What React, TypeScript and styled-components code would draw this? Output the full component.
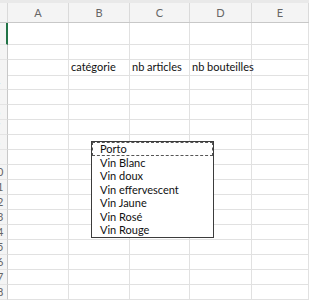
import React from 'react';
import styled, { createGlobalStyle } from 'styled-components';

const GlobalStyle = createGlobalStyle`
  html, body {
    margin: 0;
    padding: 0;
    background: #ffffff;
  }
  * {
    box-sizing: border-box;
  }
`;

const COLS = '8px 61px 61px 60px 62px 1fr';
const GRID = '#e1e1e1';

const Sheet = styled.div`
  position: relative;
  width: 309px;
  height: 300px;
  overflow: hidden;
  background: #ffffff;
  font-family: Lato, 'Liberation Sans', sans-serif;
  font-size: 11px;
  color: #111;
`;

const TopStrip = styled.div`
  height: 3px;
  background: #e9e9e9;
`;

const HeaderRow = styled.div`
  display: grid;
  grid-template-columns: ${COLS};
  height: 20px;
  background: #f4f4f4;
  border-bottom: 1px solid #c8c8c8;
`;

const HeaderCell = styled.div`
  display: flex;
  align-items: center;
  justify-content: center;
  border-right: 1px solid #dadada;
  color: #666;
  font-size: 11px;
`;

const Row = styled.div<{ $h: number }>`
  display: grid;
  grid-template-columns: ${COLS};
  height: ${p => p.$h}px;
`;

// the row-number column is cropped at the window edge: only the last digit shows
const RowHead = styled.div<{ $active?: boolean }>`
  overflow: hidden;
  background: #f4f4f4;
  border-bottom: 1px solid #e4e4e4;
  border-right: ${p => (p.$active ? '2px solid #217346' : '1px solid #c8c8c8')};
`;

const RowNum = styled.span`
  display: block;
  width: 24px;
  margin-left: -15px;
  text-align: center;
  line-height: 14px;
  color: #666;
  font-size: 11px;
`;

const Cell = styled.div`
  display: flex;
  align-items: center;
  padding-left: 2px;
  padding-bottom: 2px;
  white-space: nowrap;
  border-right: 1px solid ${GRID};
  border-bottom: 1px solid ${GRID};
`;

const ListBox = styled.div`
  position: absolute;
  left: 91px;
  top: 141px;
  width: 123px;
  height: 97px;
  background: #ffffff;
  border: 1px solid #3c3c3c;
`;

const ListItem = styled.div<{ $focus?: boolean }>`
  height: 13.5px;
  line-height: 12px;
  padding-left: 7px;
  font-size: 11px;
  color: #111;
  border: 1px ${p => (p.$focus ? 'dashed #555' : 'solid transparent')};
`;

const columns = ['A', 'B', 'C', 'D', 'E'];
const rowCount = 18;
const values: Record<number, string[]> = {
  3: ['', 'catégorie', 'nb articles', 'nb bouteilles', ''],
};
const choices = ['Porto', 'Vin Blanc', 'Vin doux', 'Vin effervescent', 'Vin Jaune', 'Vin Rosé', 'Vin Rouge'];

const App: React.FC = () => {
  const rows = Array.from({ length: rowCount }, (_, i) => i + 1);

  return (
    <Sheet>
      <GlobalStyle />
      <TopStrip />
      <HeaderRow>
        <HeaderCell />
        {columns.map(c => (
          <HeaderCell key={c}>{c}</HeaderCell>
        ))}
      </HeaderRow>
      {rows.map(r => (
        <Row key={r} $h={r === 1 ? 22 : 15}>
          <RowHead $active={r === 1}>
            <RowNum>{r}</RowNum>
          </RowHead>
          {columns.map((c, ci) => (
            <Cell key={c}>{values[r] ? values[r][ci] : ''}</Cell>
          ))}
        </Row>
      ))}

      <ListBox>
        {choices.map((item, i) => (
          <ListItem key={item} $focus={i === 0}>
            {item}
          </ListItem>
        ))}
      </ListBox>
    </Sheet>
  );
};

export default App;
